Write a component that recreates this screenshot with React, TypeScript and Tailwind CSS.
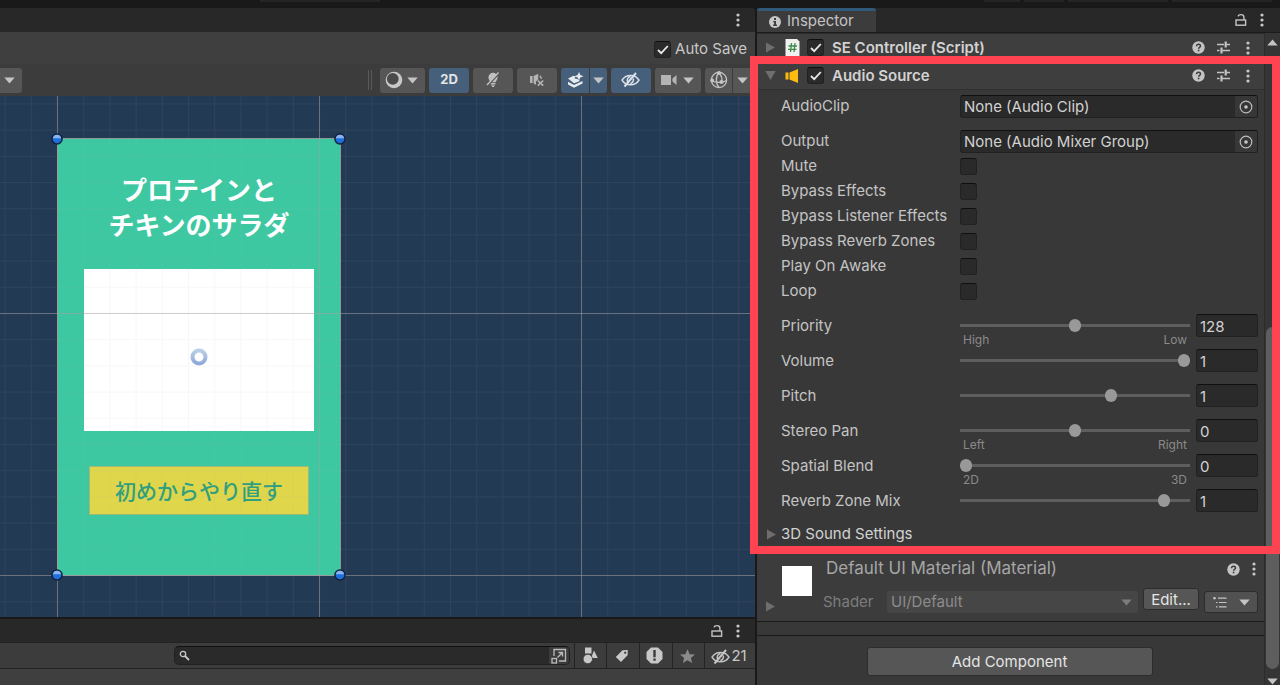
import * as React from "react"
import { clsx } from "clsx"

const toggles = ["Mute", "Bypass Effects", "Bypass Listener Effects", "Bypass Reverb Zones", "Play On Awake", "Loop"]

type SliderProps = {
  label: string
  min: number
  max: number
  value: number
  left?: string
  right?: string
}

const sliders: SliderProps[] = [
  { label: "Priority", min: 0, max: 256, value: 128, left: "High", right: "Low" },
  { label: "Volume", min: 0, max: 1, value: 1 },
  { label: "Pitch", min: -3, max: 3, value: 1 },
  { label: "Stereo Pan", min: -1, max: 1, value: 0, left: "Left", right: "Right" },
  { label: "Spatial Blend", min: 0, max: 1, value: 0, left: "2D", right: "3D" },
  { label: "Reverb Zone Mix", min: 0, max: 1.1, value: 1 },
]

/* Icons */
function Dots() {
  return (
    <svg width="4" height="14" viewBox="0 0 4 14" fill="#c8c8c8">
      <circle cx="2" cy="2" r="1.6" />
      <circle cx="2" cy="7" r="1.6" />
      <circle cx="2" cy="12" r="1.6" />
    </svg>
  )
}

function Lock() {
  return (
    <svg width="12" height="14" viewBox="0 0 12 14" fill="none" stroke="#c4c4c4" strokeWidth="1.4">
      <rect x="1" y="7" width="9.6" height="5.2" />
      <path d="M3.2 3.4C3.4 2.1 4.4 1.600 6 1.600c1.900 0 2.900.9 2.900 2.500V7" />
    </svg>
  )
}

function Help() {
  return (
    <svg width="13" height="13" viewBox="0 0 13 13">
      <circle cx="6.5" cy="6.5" r="6.2" fill="#c4c4c4" />
      <path d="M4.500 5.200c0-1.300.8-2 2-2s2 .7 2 1.800c0 1.300-1.900 1.300-1.900 2.700" fill="none" stroke="#3c3c3c" strokeWidth="1.500" />
      <rect x="5.800" y="8.700" width="1.600" height="1.600" fill="#3c3c3c" />
    </svg>
  )
}

function Preset() {
  return (
    <svg width="13" height="13" viewBox="0 0 13 13" fill="none" stroke="#c4c4c4" strokeWidth="1.400">
      <path d="M0 3.500h7M9 3.500h4M0 9.500h2.500M5 9.500h8" />
      <path d="M8.700 0.500v6M4.500 6.500v6" strokeWidth="2.200" />
    </svg>
  )
}

function Caret({ className = "text-[#c4c4c4]" }: { className?: string }) {
  return (
    <svg className={className} width="11" height="7" viewBox="0 0 11 7" fill="currentColor">
      <path d="M0.300 0.500h10.400L5.500 6.500z" />
    </svg>
  )
}

function Foldout({ open = false }: { open?: boolean }) {
  return (
    <svg width="11" height="11" viewBox="0 0 11 11" fill="#6e6e6e">
      <path d={open ? "M0.300 1h10.400L5.500 10z" : "M1 0.500v10L10 5.500z"} />
    </svg>
  )
}

function Picker() {
  return (
    <svg width="14" height="14" viewBox="0 0 14 14" fill="none">
      <circle cx="7" cy="7" r="5.800" stroke="#bdbdbd" strokeWidth="1.200" />
      <circle cx="7" cy="7" r="1.800" fill="#c8c8c8" />
    </svg>
  )
}

function HiddenEye({ color }: { color: string }) {
  return (
    <svg width="19" height="16" viewBox="0 0 19 16" fill="none" stroke={color} strokeWidth="1.500">
      <path d="M1 8.200C3 4.800 6 3.400 9.500 3.400s6.500 1.400 8.500 4.800c-2 3.200-5 4.600-8.500 4.600S3 11.400 1 8.200z" />
      <path d="M7 10.500C5.400 8 6.500 5 9.500 4.400M12.300 6.500c.6 2-.5 4.500-3 5" />
      <path d="M3.500 14.500L15 1" strokeWidth="2" />
    </svg>
  )
}

function Check({ checked = false, label, id }: { checked?: boolean; label?: string; id?: string }) {
  return (
    <span className="grid size-[17px] shrink-0">
      <input
        id={id}
        type="checkbox"
        aria-label={label}
        defaultChecked={checked}
        className="peer col-start-1 row-start-1 size-[17px] appearance-none rounded-[3px] border border-[#212121] border-t-[#0f0f0f] bg-[#2a2a2a]"
      />
      <svg
        className="pointer-events-none invisible col-start-1 row-start-1 self-center justify-self-center peer-checked:visible"
        width="12"
        height="10"
        viewBox="0 0 12 10"
        fill="none"
        stroke="#e8e8e8"
        strokeWidth="1.800"
      >
        <path d="M1 5l3.200 3.200L10.800 1" />
      </svg>
    </span>
  )
}

/* Scene view */
function ToolButton({ active, label, className, children }: { active?: boolean; label: string; className: string; children: React.ReactNode }) {
  return (
    <button
      aria-label={label}
      className={clsx("flex h-[25px] shrink-0 items-center justify-center rounded-[3px]", active ? "bg-[#46607c]" : "bg-[#565656]", className)}
    >
      {children}
    </button>
  )
}

function SceneToolbar() {
  return (
    <div className="flex h-8 items-center bg-[#3c3c3c]">
      <button aria-label="Tool options" className="flex h-[25px] w-[22px] items-center rounded-r-[3px] bg-[#565656] pl-1">
        <Caret />
      </button>
      <div className="ml-auto flex items-center gap-1">
        <span className="mr-1 h-5 w-1 border-x border-[#5a5a5a]" />
        <ToolButton label="Shading" className="w-[45px] gap-1 pr-0.5">
          <svg width="18" height="18" viewBox="0 0 18 18">
            <circle cx="9" cy="9" r="8.300" fill="#c8c8c8" />
            <circle cx="7.800" cy="7.800" r="5.900" fill="#4a4a4a" />
          </svg>
          <Caret />
        </ToolButton>
        <ToolButton label="2D view" active className="w-10 text-[13px] font-bold text-[#e4e4e4]">
          2D
        </ToolButton>
        <ToolButton label="Lighting" className="w-10">
          <svg width="16" height="16" viewBox="0 0 16 16" fill="#c0c0c0">
            <path d="M8 0.800a4.600 4.600 0 0 0-4.600 4.600c0 2 1.400 2.800 2 4.800h5.200c.6-2 2-2.800 2-4.800A4.600 4.600 0 0 0 8 .8z" />
            <path d="M5.600 11h4.800v1.600H5.600zM6.200 13.300h3.600L8.800 15H7.200z" />
            <path d="M3 13.500L14.500 1" stroke="#565656" strokeWidth="1.500" />
            <path d="M2 13L13.500 0.500" stroke="#c0c0c0" strokeWidth="1.400" />
          </svg>
        </ToolButton>
        <ToolButton label="Audio" className="w-10">
          <svg width="16" height="14" viewBox="0 0 16 14" fill="#b4b4b4">
            <path d="M1 3h2.600v7H1zM4.600 3L9.200.8v5.700L7 8.500v3.300l-2.400-1.300z" />
            <path d="M8.800 7.500l5.400 5.200M14.200 7.500l-5.400 5.200" stroke="#b4b4b4" strokeWidth="1.600" />
            <path d="M10.800 2.800c1 .8 1.400 1.800 1.500 3.200" fill="none" stroke="#b4b4b4" strokeWidth="1.400" />
          </svg>
        </ToolButton>
        <div className="flex gap-px">
          <ToolButton label="Effects" active className="w-7 rounded-r-none">
            <svg width="17" height="16" viewBox="0 0 17 16" fill="#e8ebee">
              <path d="M1 6.500l5.500-2.800 2 .8-1 2 3 .4 2.500 2L7 11.300z" />
              <path d="M1 9.700l6 3.200 8.500-3.800v2.500L7 15.800 1 12.500z" />
              <path d="M12 0l1.300 3 3.200 1.300-3.200 1.300L12 8.600l-1.300-3-3.200-1.300L10.700 3z" />
            </svg>
          </ToolButton>
          <ToolButton label="Effects options" active className="w-[17px] rounded-l-none">
            <Caret />
          </ToolButton>
        </div>
        <ToolButton label="Hidden objects" active className="w-10 pr-0.5">
          <HiddenEye color="#dce2e8" />
        </ToolButton>
        <ToolButton label="Camera" className="w-[46px] gap-1.5 pr-0.5">
          <svg width="16" height="12" viewBox="0 0 16 12" fill="#b4b4b4">
            <path d="M0 1h10v10H0zM11.500 4.500L15.500 1v10l-4-3.500z" />
          </svg>
          <Caret />
        </ToolButton>
        <div className="flex gap-px">
          <ToolButton label="Gizmos" className="w-[27px] rounded-r-none">
            <svg width="18" height="18" viewBox="0 0 18 18" fill="none" stroke="#c4c4c4" strokeWidth="1.300">
              <circle cx="9" cy="9" r="7.600" />
              <path d="M9 1.500C5.500 5 5.500 13 9 16.500M9 2c3 3 3.500 6 2.500 9.500M1.500 9.500c4 2.600 11 2.600 15 0" />
              <g fill="#c4c4c4" stroke="none">
                <circle cx="9" cy="2" r="2" />
                <circle cx="2.200" cy="9.500" r="1.900" />
                <circle cx="11.500" cy="11" r="2.100" />
              </g>
            </svg>
          </ToolButton>
          <ToolButton label="Gizmo options" className="w-[22px] rounded-none pr-1">
            <Caret />
          </ToolButton>
        </div>
      </div>
    </div>
  )
}

function Handle({ className }: { className: string }) {
  return (
    <svg className={clsx("absolute", className)} width="12" height="12" viewBox="0 0 12 12">
      <circle cx="6" cy="6" r="5.800" fill="#14213a" />
      <circle cx="6" cy="6" r="4.300" fill="#1d6fe0" />
      <path d="M1.800 5.200a4.300 4.300 0 0 1 8.400 0z" fill="#8ab4ee" />
    </svg>
  )
}

function SceneCanvas() {
  return (
    <div className="relative flex-1 overflow-hidden bg-[#233a54]">
      <div className="absolute top-[42px] left-[57px] flex w-[284px] flex-col items-center border border-[#8a9a98] bg-[#3dc8a2] pt-8 pb-[60px]">
        <p className="text-center font-['Noto_Sans_CJK_JP',sans-serif] text-[26px] leading-[35px] font-bold text-white">
          プロテインと
          <br />
          チキンのサラダ
        </p>
        <div className="mt-7 h-[162px] w-[230px] bg-white" />
        <button className="mt-[35px] h-[49px] w-[220px] border border-[#9db877] bg-[#dfd64b] font-['Noto_Sans_CJK_JP',sans-serif] text-[21px] leading-none font-medium text-[#2f9f7f]">
          初めからやり直す
        </button>
      </div>
      <svg className="pointer-events-none absolute inset-0 size-full">
        <defs>
          <pattern id="minor" x="57" y="217" width="26.200" height="26.200" patternUnits="userSpaceOnUse">
            <path d="M0.500 0v27M0 0.500h27" stroke="#a8a8a8" strokeOpacity="0.090" />
          </pattern>
          <pattern id="major" x="57" y="217" width="262" height="262" patternUnits="userSpaceOnUse">
            <path d="M0.500 0v262M0 0.500h262" stroke="#a8a0a0" strokeOpacity="0.500" />
          </pattern>
        </defs>
        <rect width="100%" height="100%" fill="url(#minor)" />
        <rect width="100%" height="100%" fill="url(#major)" />
      </svg>
      <Handle className="top-[37px] left-[51px]" />
      <Handle className="top-[37px] left-[334px]" />
      <Handle className="top-[473px] left-[51px]" />
      <Handle className="top-[473px] left-[334px]" />
      <svg className="absolute top-[252px] left-[190px]" width="18" height="18" viewBox="0 0 18 18">
        <defs>
          <linearGradient id="pivot" x2="0" y2="1">
            <stop offset="0" stopColor="#b9cfe6" />
            <stop offset="1" stopColor="#8ea9da" />
          </linearGradient>
        </defs>
        <circle cx="9" cy="9" r="6.500" fill="none" stroke="url(#pivot)" strokeWidth="4" />
      </svg>
    </div>
  )
}

function ProjectBar() {
  return (
    <div className="border-t-2 border-[#191919] bg-[#3f3f3f]">
      <div className="flex h-[23px] items-center justify-end gap-[13px] bg-[#282828] pr-[15px]">
        <button aria-label="Lock project">
          <Lock />
        </button>
        <button aria-label="Project menu">
          <Dots />
        </button>
      </div>
      <div className="flex h-[27px] items-stretch border-y border-[#232323] bg-[#3c3c3c] pl-[174px]">
        <div className="my-[3px] mr-1 flex flex-1 items-center overflow-hidden rounded-[5px] border border-[#212121] border-t-[#0f0f0f] bg-[#2a2a2a] pl-1">
          <svg width="11" height="11" viewBox="0 0 11 11" fill="none" stroke="#c8c8c8">
            <circle cx="4" cy="4" r="2.700" strokeWidth="1.300" />
            <path d="M6 6l4 4" strokeWidth="1.800" />
          </svg>
          <input aria-label="Search" className="min-w-0 flex-1 bg-transparent px-1 text-sm text-[#d2d2d2] outline-none" />
          <button aria-label="Open search" className="flex h-full w-5 items-center justify-center bg-[#3c3c3c]">
            <svg width="16" height="16" viewBox="0 0 16 16" fill="none" stroke="#bcbcbc" strokeWidth="1.300">
              <path d="M3 8V1.500h11.500V13H8" />
              <rect x="1" y="10.500" width="4.500" height="4.500" />
              <path d="M6.500 9.500l5-5M7.500 4.500h4v4" />
            </svg>
          </button>
        </div>
        <button aria-label="Filter by type" className="flex w-8 items-center justify-center border-l border-[#232323]">
          <svg width="15" height="17" viewBox="0 0 15 17" fill="#c8c8c8">
            <path d="M2 0.500h6.500v6H2zM8 11l3-7.500 3.800 7.500z" />
            <circle cx="4.800" cy="12" r="4.700" stroke="#3c3c3c" strokeWidth="0.800" />
          </svg>
        </button>
        <button aria-label="Filter by label" className="flex w-[33px] items-center justify-center border-l border-[#232323] pr-[3px]">
          <svg width="14" height="14" viewBox="0 0 14 14">
            <path fill="#c8c8c8" fillRule="evenodd" d="M7.500 1.200L12.800 1l-.2 5.300L6 13 .8 8zM10.200 2.600a1.100 1.100 0 1 0 .01 0z" />
          </svg>
        </button>
        <button aria-label="Errors" className="flex w-[33px] items-center justify-center border-l border-[#232323] pr-[3px]">
          <svg width="17" height="17" viewBox="0 0 17 17">
            <path d="M5 0.500h7L16.500 5v7L12 16.500H5L.5 12V5z" fill="#c8c8c8" />
            <path d="M7.300 3h2.400v7.200H7.300zM7.300 11.500h2.400v2.200H7.300z" fill="#3c3c3c" />
          </svg>
        </button>
        <button aria-label="Favourites" className="flex w-8 items-center justify-center border-l border-[#232323] pr-[3px]">
          <svg width="15" height="14" viewBox="0 0 15 14" fill="#8a8a8a">
            <path d="M7.500 0.300l2.100 4.900 5.300.4-4 3.400 1.200 5-4.600-2.700L2.900 14l1.200-5-4-3.400 5.300-.4z" />
          </svg>
        </button>
        <button className="flex w-[51px] items-center justify-center gap-px border-l border-[#232323] pt-0.5 pr-0.5 text-[15px] text-[#c8c8c8]">
          <HiddenEye color="#c4c4c4" />
          21
        </button>
      </div>
      <div className="h-4" />
    </div>
  )
}

/* Inspector */
function ComponentHeader({ title, open, icon }: { title: string; open?: boolean; icon: React.ReactNode }) {
  return (
    <div className="flex h-7 items-center border-t border-[#2a2a2a] bg-[#3e3e3e] pr-[14px] pl-2">
      <button aria-label={"Toggle " + title}>
        <Foldout open={open} />
      </button>
      <span className="ml-2 flex w-4 justify-center">{icon}</span>
      <span className="ml-[7px] flex">
        <Check checked label={"Enable " + title} />
      </span>
      <h2 className="ml-2 flex-1 pt-px text-[15px] font-semibold text-[#d2d2d2]">{title}</h2>
      <div className="flex items-center gap-3">
        <button aria-label="Help">
          <Help />
        </button>
        <button aria-label="Presets">
          <Preset />
        </button>
        <button aria-label="More" className="ml-1">
          <Dots />
        </button>
      </div>
    </div>
  )
}

function ObjectField({ label, value }: { label: string; value: string }) {
  const id = label.toLowerCase()
  return (
    <div className="flex h-[25px] items-center">
      <label htmlFor={id} className="w-[179px]">
        {label}
      </label>
      <div className="flex h-[23px] min-w-0 flex-1 overflow-hidden rounded-[3px] border border-[#212121] border-t-[#0f0f0f] bg-[#2a2a2a]">
        <input id={id} readOnly defaultValue={value} className="min-w-0 flex-1 bg-transparent px-[3px] pt-0.5 text-[#d2d2d2] outline-none" />
        <button aria-label={"Select " + label} className="flex w-[22px] items-center justify-center bg-[#373737]">
          <Picker />
        </button>
      </div>
    </div>
  )
}

function SliderRow({ label, min, max, value, left, right }: SliderProps) {
  const id = label.toLowerCase().replace(/ /g, "-")
  return (
    <div className="flex h-[35px] items-start">
      <label htmlFor={id} className="w-[179px] leading-[25px]">
        {label}
      </label>
      <div className="min-w-0 flex-1 pt-[3px]">
        <input
          id={id}
          type="range"
          min={min}
          max={max}
          step="any"
          defaultValue={value}
          className="block h-[19px] w-full appearance-none bg-transparent [&::-webkit-slider-runnable-track]:h-[3px] [&::-webkit-slider-runnable-track]:bg-[#5e5e5e] [&::-webkit-slider-thumb]:-mt-[5px] [&::-webkit-slider-thumb]:h-[13px] [&::-webkit-slider-thumb]:w-3 [&::-webkit-slider-thumb]:appearance-none [&::-webkit-slider-thumb]:rounded-full [&::-webkit-slider-thumb]:bg-[#999999]"
        />
        {left && (
          <div className="flex justify-between px-[3px] text-[12px] leading-[10px] text-[#8a8a8a]">
            <span>{left}</span>
            <span>{right}</span>
          </div>
        )}
      </div>
      <input
        aria-label={label + " value"}
        defaultValue={value}
        className="mt-px ml-1.5 h-[23px] w-[62px] rounded-[3px] border border-[#212121] border-t-[#0f0f0f] bg-[#2a2a2a] px-[3px] pt-0.5 text-[#d2d2d2] outline-none"
      />
    </div>
  )
}

function AudioSource() {
  return (
    <section>
      <ComponentHeader
        title="Audio Source"
        open
        icon={
          <svg width="14" height="14" viewBox="0 0 14 14" fill="#fdbb0f">
            <path d="M0.500 3.500h3v7h-3zM4.500 3.500L13 0v14l-8.500-3.500z" />
          </svg>
        }
      />
      <div className="border-t border-[#303030] pt-1 pr-1.5 pl-6 text-[15px] text-[#c4c4c4]">
        <ObjectField label="AudioClip" value="None (Audio Clip)" />
        <div className="mt-2.5">
          <ObjectField label="Output" value="None (Audio Mixer Group)" />
        </div>
        {toggles.map((name) => (
          <div key={name} className="flex h-[25px] items-center">
            <label htmlFor={name} className="w-[179px] whitespace-nowrap">
              {name}
            </label>
            <Check id={name} />
          </div>
        ))}
        <div className="mt-[9px]">
          {sliders.map((s) => (
            <SliderRow key={s.label} {...s} />
          ))}
        </div>
      </div>
      <button className="flex h-[23px] items-center gap-1 pl-[9px] text-[15px] text-[#d2d2d2]">
        <Foldout />
        3D Sound Settings
      </button>
    </section>
  )
}

function Material() {
  return (
    <section className="mt-[7px] flex h-[69px] border-b border-[#1a1a1a] bg-[#3c3c3c] pr-1.5 pl-2">
      <button aria-label="Toggle material" className="mb-[9px] self-end">
        <Foldout />
      </button>
      <div className="mt-[13px] ml-1.5 size-[30px] bg-white" />
      <div className="ml-[11px] min-w-0 flex-1">
        <div className="flex h-8 items-center gap-3">
          <h2 className="flex-1 pl-[3px] text-[17px] text-[#a6a6a6]">Default UI Material (Material)</h2>
          <button aria-label="Help">
            <Help />
          </button>
          <button aria-label="More" className="mr-0.5">
            <Dots />
          </button>
        </div>
        <div className="flex items-center pt-0.5 text-[15px]">
          <label htmlFor="shader" className="mt-1 w-16 text-[#7c7c7c]">
            Shader
          </label>
          <div className="mt-1 grid min-w-0 flex-1 items-center">
            <select id="shader" className="col-start-1 row-start-1 h-[22px] appearance-none rounded-[3px] bg-[#464646] px-1 text-[#8c8c8c]">
              <option>UI/Default</option>
            </select>
            <span className="pointer-events-none col-start-1 row-start-1 mr-1.5 justify-self-end">
              <Caret className="text-[#7c7c7c]" />
            </span>
          </div>
          <button className="mb-0.5 ml-[5px] h-[22px] w-14 rounded-[3px] border border-[#2c2c2c] bg-[#565656] leading-none text-[#e4e4e4]">Edit...</button>
          <button aria-label="Shader menu" className="mt-1 ml-[5px] flex h-[22px] w-[54px] items-center justify-center gap-3 rounded-[3px] border border-[#2c2c2c] bg-[#515151]">
            <svg width="14" height="11" viewBox="0 0 14 11" stroke="#c4c4c4" strokeWidth="1.200">
              <path d="M0 1.200h3M5 1.200h8.500M3 5.500h1.500M6 5.500h7.500M3 9.800h1.500M6 9.800h7.500M1.500 0v2.500" />
            </svg>
            <Caret />
          </button>
        </div>
      </div>
    </section>
  )
}

function Inspector() {
  return (
    <aside className="relative flex w-[523px] shrink-0 flex-col bg-[#383838]">
      <div className="flex h-[25px] border-b border-[#1c1c1c] bg-[#282828]">
        <div className="flex w-[119px] items-center gap-1.5 rounded-t-[3px] border-t-3 border-[#31597a] bg-[#3c3c3c] pl-3 text-[15px] text-[#c4c4c4]">
          <svg width="12" height="12" viewBox="0 0 12 12">
            <circle cx="6" cy="6" r="6" fill="#c8c8c8" />
            <path d="M5 2h2v2H5zM4.200 5H7v3.600h1V10H4.200V8.600h.9V6.300h-.9z" fill="#3c3c3c" />
          </svg>
          Inspector
        </div>
        <div className="ml-auto flex items-center gap-[13px] pr-4">
          <button aria-label="Lock inspector">
            <Lock />
          </button>
          <button aria-label="Inspector menu">
            <Dots />
          </button>
        </div>
      </div>
      <div className="flex flex-1">
        <div className="min-w-0 flex-1">
          <ComponentHeader
            title="SE Controller (Script)"
            icon={
              <svg width="15" height="17" viewBox="0 0 15 17">
                <path d="M0.500 0H12l2.500 2.500V17H.5z" fill="#f0f0f0" />
                <path d="M6.500 4l-1 9M10 4L9 13M3.500 7h8.500M3 10.300h8.500" stroke="#3c8a4c" strokeWidth="1.300" />
              </svg>
            }
          />
          <AudioSource />
          <Material />
          <div className="h-3.5 border-b border-[#1a1a1a]" />
          <div className="flex justify-center pt-[11px] pr-0.5">
            <button className="h-[29px] w-[286px] rounded-[3px] border border-[#2c2c2c] bg-[#565656] pt-px text-[15px] text-[#e4e4e4]">Add Component</button>
          </div>
        </div>
        <div className="flex w-4 flex-col items-center border-l border-[#2c2c2c] bg-[#353535]">
          <button aria-label="Scroll up" className="flex h-5 rotate-180 items-center">
            <Caret />
          </button>
          <div className="flex-1" />
          <div className="h-[342px] w-[13px] rounded-full bg-[#5e5e5e]" />
          <button aria-label="Scroll down" className="flex h-4 items-center pt-2">
            <Caret />
          </button>
        </div>
      </div>
      {/* Highlight frame around the Audio Source component */}
      <div className="pointer-events-none absolute top-12 right-0 -left-[7px] h-[498px] border-8 border-[#ff4350]" />
    </aside>
  )
}

export default function App() {
  return (
    <div className="flex min-h-screen flex-col overflow-hidden bg-[#191919] font-['Inter',sans-serif]">
      <div className="flex h-2 items-start gap-1">
        <span className="ml-[260px] h-0.5 w-[120px] bg-[#242424]" />
        <span className="ml-auto h-0.5 w-9 bg-[#242424]" />
        <span className="h-0.5 w-10 bg-[#242424]" />
        <span className="h-0.5 w-[100px] bg-[#242424]" />
        <span className="mr-2 h-0.5 w-[100px] bg-[#242424]" />
      </div>
      <div className="flex flex-1 gap-0.5">
        <main className="flex min-w-0 flex-1 flex-col">
          <div className="flex h-6 items-center justify-end rounded-tr-[3px] bg-[#282828] pr-[15px]">
            <button aria-label="Scene menu">
              <Dots />
            </button>
          </div>
          <div className="flex h-8 items-center justify-end gap-1 bg-[#3f3f3f] pt-[3px] pr-2 text-[15px] text-[#c8c8c8]">
            <Check checked id="auto-save" />
            <label htmlFor="auto-save">Auto Save</label>
          </div>
          <SceneToolbar />
          <SceneCanvas />
          <ProjectBar />
        </main>
        <Inspector />
      </div>
    </div>
  )
}
